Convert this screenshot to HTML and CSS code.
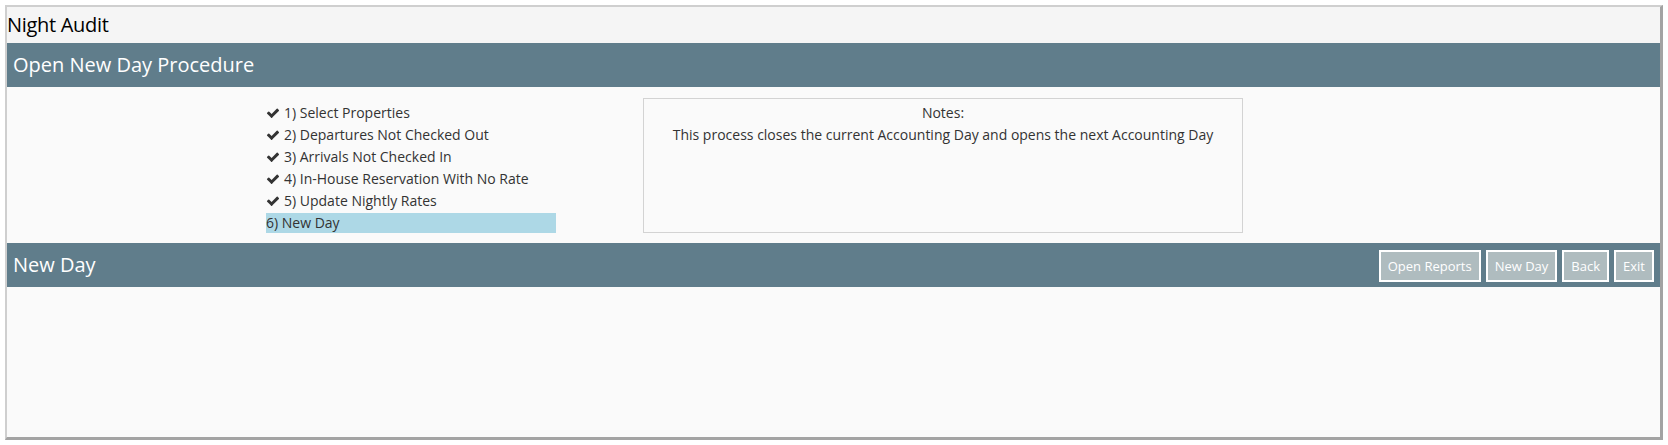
FILE: index.html
```html
<!DOCTYPE html>
<html lang="en">
<head>
    <meta charset="UTF-8">
    <meta name="viewport" content="width=device-width, initial-scale=1.0">
    <title>Night Audit</title>
    <link rel="stylesheet" href="styles.css">
</head>
<body>
    <div class="audit-window">
        <div class="window-title">Night Audit</div>

        <div class="section-bar">
            <span class="section-title">Open New Day Procedure</span>
        </div>

        <div class="procedure">
            <ul class="steps">
                <li class="done"><svg class="check" viewBox="0 0 1792 1792"><path d="M1671 566q0 40-28 68l-724 724-136 136q-28 28-68 28t-68-28l-136-136-362-362q-28-28-28-68t28-68l136-136q28-28 68-28t68 28l294 295 656-657q28-28 68-28t68 28l136 136q28 28 28 68z"/></svg>1) Select Properties</li>
                <li class="done"><svg class="check" viewBox="0 0 1792 1792"><path d="M1671 566q0 40-28 68l-724 724-136 136q-28 28-68 28t-68-28l-136-136-362-362q-28-28-28-68t28-68l136-136q28-28 68-28t68 28l294 295 656-657q28-28 68-28t68 28l136 136q28 28 28 68z"/></svg>2) Departures Not Checked Out</li>
                <li class="done"><svg class="check" viewBox="0 0 1792 1792"><path d="M1671 566q0 40-28 68l-724 724-136 136q-28 28-68 28t-68-28l-136-136-362-362q-28-28-28-68t28-68l136-136q28-28 68-28t68 28l294 295 656-657q28-28 68-28t68 28l136 136q28 28 28 68z"/></svg>3) Arrivals Not Checked In</li>
                <li class="done"><svg class="check" viewBox="0 0 1792 1792"><path d="M1671 566q0 40-28 68l-724 724-136 136q-28 28-68 28t-68-28l-136-136-362-362q-28-28-28-68t28-68l136-136q28-28 68-28t68 28l294 295 656-657q28-28 68-28t68 28l136 136q28 28 28 68z"/></svg>4) In-House Reservation With No Rate</li>
                <li class="done"><svg class="check" viewBox="0 0 1792 1792"><path d="M1671 566q0 40-28 68l-724 724-136 136q-28 28-68 28t-68-28l-136-136-362-362q-28-28-28-68t28-68l136-136q28-28 68-28t68 28l294 295 656-657q28-28 68-28t68 28l136 136q28 28 28 68z"/></svg>5) Update Nightly Rates</li>
                <li class="current">6) New Day</li>
            </ul>

            <div class="notes">
                <div>Notes:</div>
                <div>This process closes the current Accounting Day and opens the next Accounting Day</div>
            </div>
        </div>

        <div class="section-bar">
            <span class="section-title">New Day</span>
            <div class="actions">
                <button class="action-btn">Open Reports</button>
                <button class="action-btn">New Day</button>
                <button class="action-btn">Back</button>
                <button class="action-btn">Exit</button>
            </div>
        </div>

        <div class="step-body"></div>
    </div>
</body>
</html>
```

FILE: styles.css
```css
body {
    margin: 5px;
    background: #fff;
    font-family: 'Open Sans', 'Noto Sans', sans-serif;
    color: #333;
}

/* the frame stands in for the window's drop shadow */
.audit-window {
    height: 430px;
    background: #fafafa;
    border-style: solid;
    border-width: 2px 3px 3px 2px;
    border-color: #cfcfcf #a3a3a3 #a3a3a3 #cfcfcf;
    display: flex;
    flex-direction: column;
}

.window-title {
    background: #f5f5f5;
    color: #000;
    font-size: 20px;
    line-height: 36px;
    height: 36px;
    letter-spacing: -0.3px;
}

.section-bar {
    background: #607d8b;
    height: 44px;
    display: flex;
    align-items: center;
    justify-content: space-between;
    padding: 0 6px;
}

.section-title {
    color: #fff;
    font-size: 20px;
    line-height: 44px;
}

/* steps + notes */
.procedure {
    display: flex;
    align-items: flex-start;
    padding: 11px 0 0 259px;
    height: 145px;
}

.steps {
    list-style: none;
    margin: 5px 0 0;
    padding: 0;
    width: 290px;
    font-size: 14px;
}

.steps li {
    line-height: 20px;
    height: 20px;
    margin-bottom: 2px;
    white-space: nowrap;
}

.check {
    width: 14px;
    height: 14px;
    fill: #333;
    vertical-align: -2px;
    margin-right: 4px;
}

.steps li.current {
    background: #add8e6;
    margin-bottom: 0;
}

.notes {
    margin-left: 87px;
    width: 598px;
    height: 130px;
    border: 1px solid #d3d3d3;
    padding-top: 3px;
    text-align: center;
    font-size: 14px;
    line-height: 22px;
}

.actions {
    display: flex;
    gap: 5px;
    padding-top: 1px;
}

.action-btn {
    height: 32px;
    padding: 0 7px;
    background: #afbcbf;
    border: 2px solid #fff;
    color: #fff;
    font-family: 'Open Sans', 'Noto Sans', sans-serif;
    font-size: 13px;
    cursor: pointer;
}

.step-body {
    flex-grow: 1;
}
```
